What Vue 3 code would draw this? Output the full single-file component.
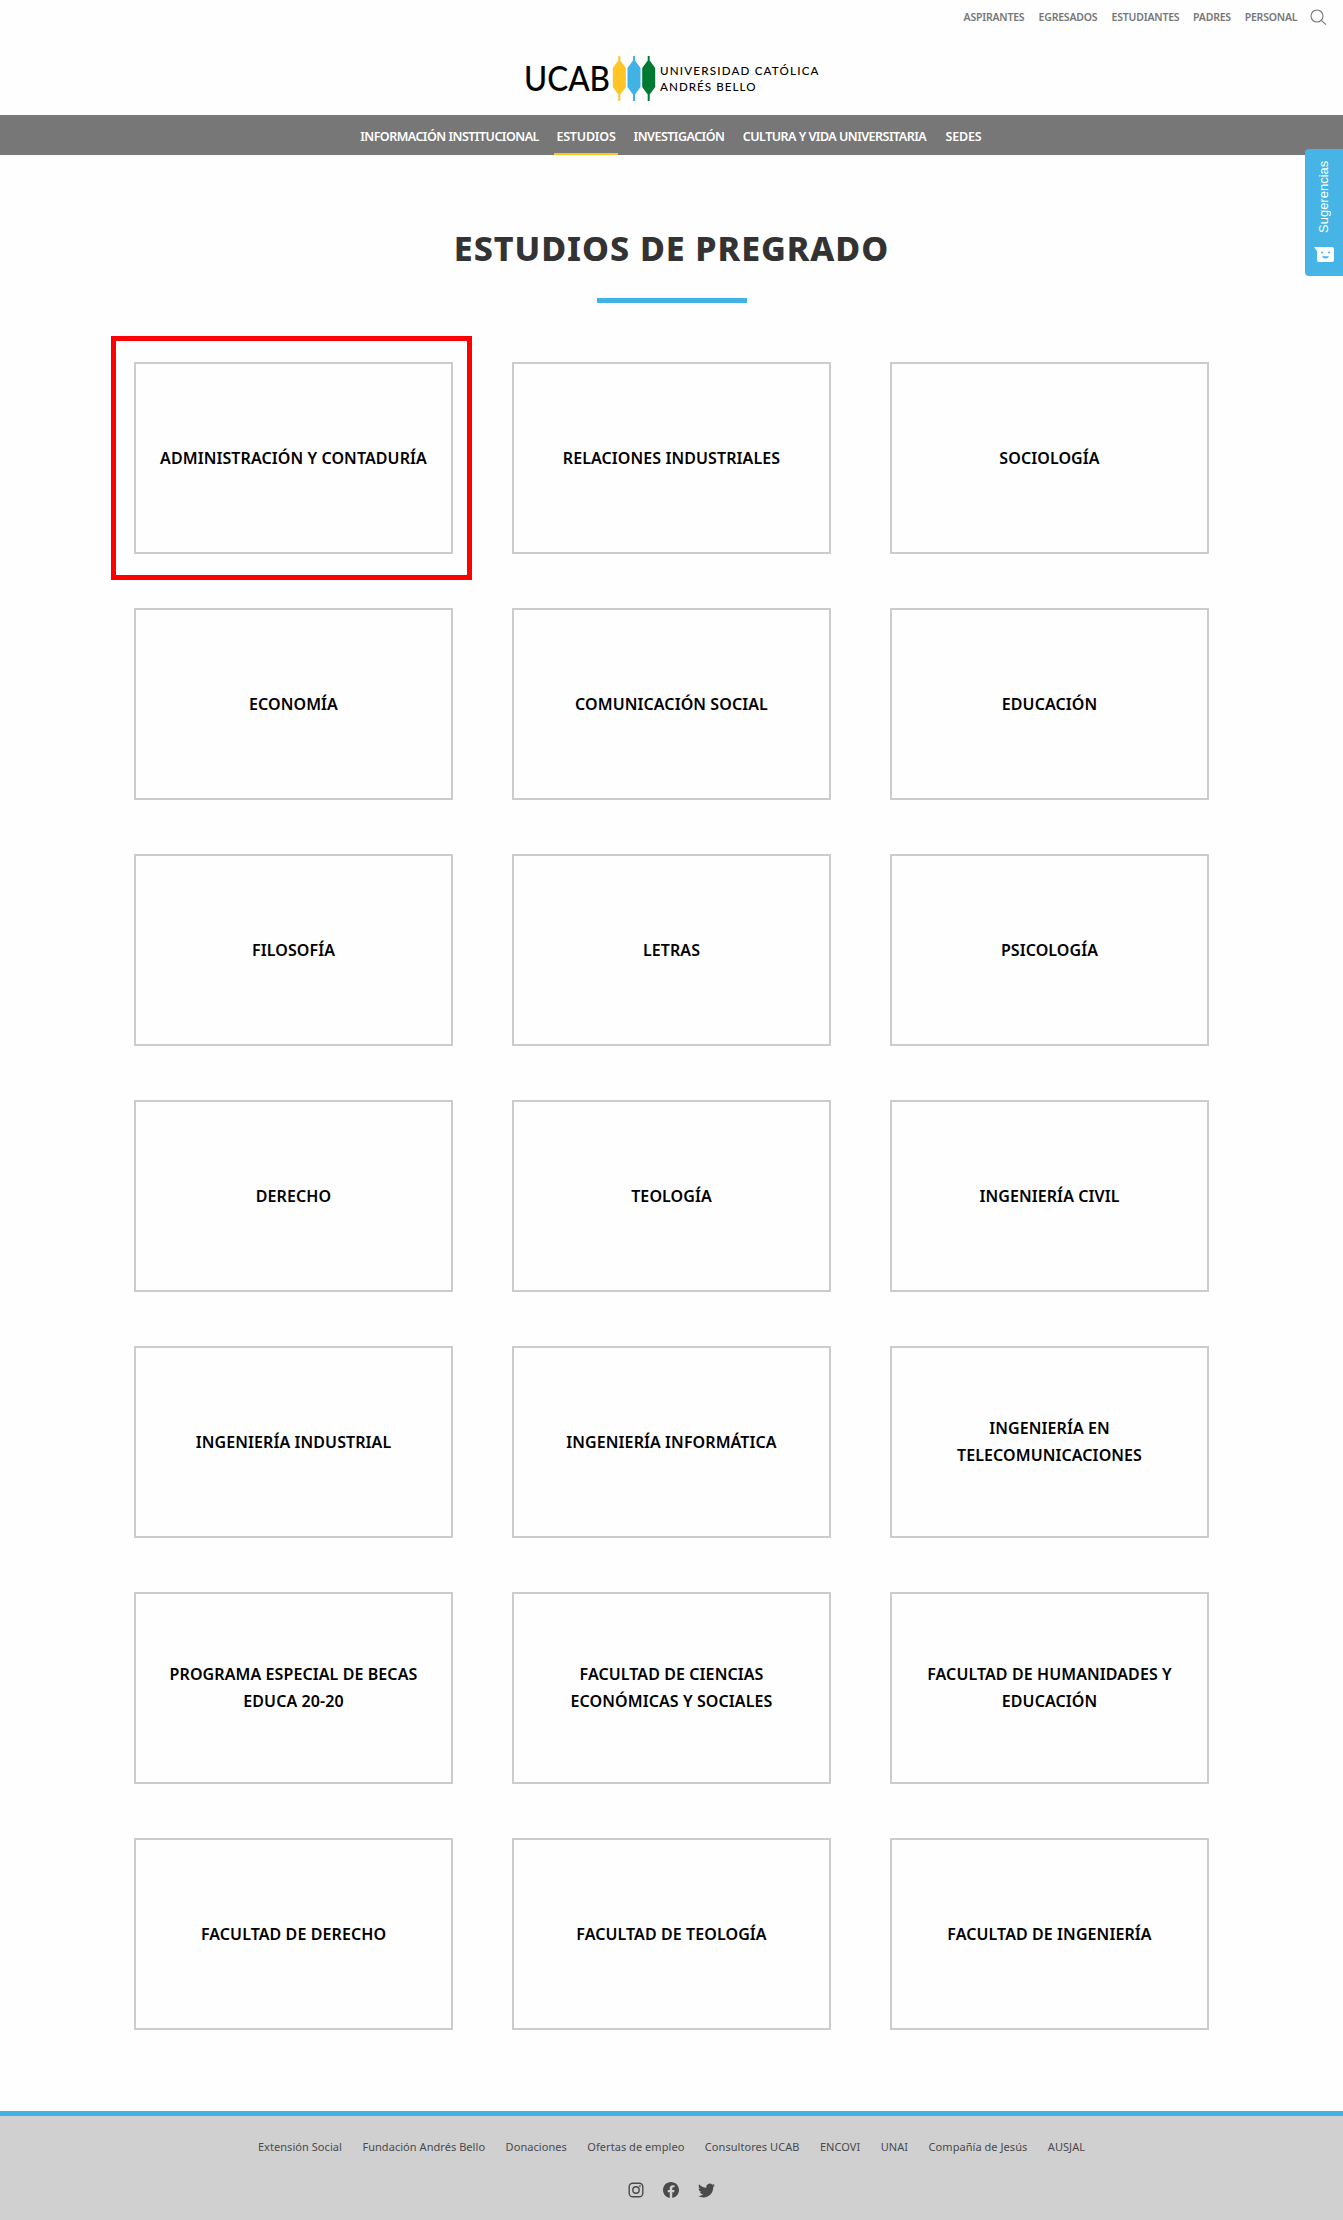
<script setup>
const topLinks = [
  { t: 'ASPIRANTES', w: 61 },
  { t: 'EGRESADOS', w: 60 },
  { t: 'ESTUDIANTES', w: 68 },
  { t: 'PADRES', w: 38 },
  { t: 'PERSONAL', w: 53 },
]
const nav = [
  { t: 'INFORMACIÓN INSTITUCIONAL', w: 178 },
  { t: 'ESTUDIOS', w: 60, active: true },
  { t: 'INVESTIGACIÓN', w: 91 },
  { t: 'CULTURA Y VIDA UNIVERSITARIA', w: 185 },
  { t: 'SEDES', w: 38 },
]
const cards = [
  'ADMINISTRACIÓN Y CONTADURÍA', 'RELACIONES INDUSTRIALES', 'SOCIOLOGÍA',
  'ECONOMÍA', 'COMUNICACIÓN SOCIAL', 'EDUCACIÓN',
  'FILOSOFÍA', 'LETRAS', 'PSICOLOGÍA',
  'DERECHO', 'TEOLOGÍA', 'INGENIERÍA CIVIL',
  'INGENIERÍA INDUSTRIAL', 'INGENIERÍA INFORMÁTICA', 'INGENIERÍA EN TELECOMUNICACIONES',
  'PROGRAMA ESPECIAL DE BECAS EDUCA 20-20', 'FACULTAD DE CIENCIAS ECONÓMICAS Y SOCIALES', 'FACULTAD DE HUMANIDADES Y EDUCACIÓN',
  'FACULTAD DE DERECHO', 'FACULTAD DE TEOLOGÍA', 'FACULTAD DE INGENIERÍA',
]
const footerLinks = ['Extensión Social', 'Fundación Andrés Bello', 'Donaciones', 'Ofertas de empleo', 'Consultores UCAB', 'ENCOVI', 'UNAI', 'Compañía de Jesús', 'AUSJAL']
</script>

<template>
  <div class="page">
    <header>
      <div class="topbar">
        <a v-for="l in topLinks" :key="l.t" :style="{ width: l.w + 'px' }">{{ l.t }}</a>
        <svg class="search" width="17" height="17" viewBox="0 0 17 17" fill="none" stroke="#777" stroke-width="1.1">
          <circle cx="7" cy="7" r="6" />
          <path d="M11.3 11.3 16 15.6" />
        </svg>
      </div>
      <svg class="logo" width="300" height="50" viewBox="0 0 300 50">
        <text class="ucab" x="3" y="38" textLength="86" lengthAdjust="spacingAndGlyphs">UCAB</text>
        <path fill="#ffc527" d="M97.300 3h2v4.500l5.500 7.500v19l-5.500 7.500V48h-2v-6.500l-5.500-7.500V15l5.500-7.500z" />
        <path fill="#41b2e6" d="M112 3h2v4.500l5.500 7.500v19l-5.500 7.500V48h-2v-6.500l-5.500-7.500V15l5.500-7.500z" />
        <path fill="#007a33" d="M126.700 3h2v4.500l5.500 7.500v19l-5.500 7.500V48h-2v-6.500l-5.500-7.500V15l5.500-7.500z" />
        <text class="uni" x="139" y="22" textLength="158.500">UNIVERSIDAD CATÓLICA</text>
        <text class="uni" x="139" y="37.600" textLength="95.500">ANDRÉS BELLO</text>
      </svg>
      <nav>
        <a v-for="n in nav" :key="n.t" :class="{ active: n.active, short: n.w < 80 }" :style="{ width: n.w + 'px' }">{{ n.t }}</a>
      </nav>
    </header>

    <main>
      <h1>ESTUDIOS DE PREGRADO</h1>
      <div class="rule"></div>
      <div class="grid">
        <div v-for="(c, i) in cards" :key="c" class="card" :class="{ marked: i === 0 }"><span>{{ c }}</span></div>
      </div>
    </main>

    <footer>
      <div class="links"><a v-for="f in footerLinks" :key="f">{{ f }}</a></div>
      <div class="social">
        <svg width="16" height="16" viewBox="0 0 16 16" fill="none" stroke="#4a4a4a" stroke-width="1.4">
          <rect x="1.200" y="1.200" width="13.600" height="13.600" rx="3.500" />
          <circle cx="8" cy="8" r="3.200" />
          <circle cx="11.900" cy="4.100" r=".9" fill="#4a4a4a" stroke="none" />
        </svg>
        <svg width="16" height="16" viewBox="0 0 24 24" fill="#4a4a4a">
          <path d="M24 12.070C24 5.400 18.630 0 12 0S0 5.400 0 12.070C0 18.100 4.390 23.090 10.130 24v-8.440H7.080v-3.490h3.050V9.410c0-3.020 1.790-4.690 4.530-4.690 1.310 0 2.690.24 2.690.24v2.970h-1.520c-1.490 0-1.960.93-1.960 1.890v2.250h3.330l-.53 3.490h-2.800V24C19.610 23.090 24 18.100 24 12.070z" />
        </svg>
        <svg width="17" height="17" viewBox="0 0 24 24" fill="#4a4a4a">
          <path d="M23.950 4.570a10 10 0 0 1-2.820.77 4.960 4.960 0 0 0 2.160-2.720c-.95.550-2 .95-3.130 1.180a4.920 4.920 0 0 0-8.380 4.480C7.690 8.090 4.070 6.130 1.640 3.160a4.820 4.820 0 0 0-.67 2.480c0 1.710.87 3.210 2.190 4.100a4.900 4.900 0 0 1-2.230-.62v.06a4.920 4.920 0 0 0 3.950 4.830 5 5 0 0 1-2.210.08 4.940 4.940 0 0 0 4.600 3.420A9.870 9.870 0 0 1 0 19.540a13.990 13.990 0 0 0 7.560 2.210c9.050 0 14-7.500 14-13.980 0-.21 0-.42-.02-.63a9.940 9.940 0 0 0 2.410-2.570z" />
        </svg>
      </div>
    </footer>

    <aside>
      <span>Sugerencias</span>
      <svg width="20" height="16" viewBox="0 0 20 16">
        <path fill="#fff" d="M0 0h18a2 2 0 0 1 2 2v11a2 2 0 0 1-2 2H5a2 2 0 0 1-2-2V4z" />
        <path d="M7 5.500h2M14 5.500h2" stroke="#46b5e6" stroke-width="1.600" />
        <path d="M8 9.200h7q-1 2.300-3.500 2.300T8 9.200z" fill="#46b5e6" />
      </svg>
    </aside>
  </div>
</template>

<style>
body { margin: 0; background: #fff; }
</style>

<style scoped>
.page { position: relative; width: 1343px; height: 2220px; display: flex; flex-direction: column; overflow: hidden; background: #fefefe; font-family: "Noto Sans", "Open Sans", sans-serif; }
header { display: flex; flex-direction: column; height: 155px; flex: none; }
.topbar { display: flex; justify-content: flex-end; gap: 13.500px; height: 35px; padding-right: 16px; margin-bottom: 18px; line-height: 35px; font-size: 10.500px; font-weight: 600; letter-spacing: -0.200px; color: #777; }
.topbar a, nav a { white-space: nowrap; display: flex; justify-content: center; }
.search { margin-top: 9px; margin-left: -1px; }
.logo { margin-left: 520.700px; flex: none; }
.ucab { font: 500 34px Lato, sans-serif; }
.uni { font: 500 11.600px Lato, sans-serif; }
nav { display: flex; justify-content: center; gap: 17.500px; height: 40px; margin-top: 12px; background: #777; color: #fff; font-size: 12.500px; font-weight: 600; line-height: 43px; letter-spacing: -0.520px; }
nav .short { letter-spacing: -0.200px; }
nav .active { position: relative; }
nav .active::after { content: ""; position: absolute; left: -2px; right: -2px; bottom: 0; height: 2px; background: #ffc527; }
main { display: flex; flex-direction: column; align-items: center; height: 1956px; flex: none; }
h1 { margin: 68px 0 0; height: 50px; line-height: 50px; font-size: 34px; font-weight: 800; letter-spacing: 0.950px; white-space: nowrap; color: #333; }
.rule { width: 150px; height: 5px; margin-top: 25px; background: #41b2e6; }
.grid { display: grid; grid-template-columns: repeat(3, 319px); grid-auto-rows: 192px; gap: 54px 59px; margin-top: 59px; }
.card { box-sizing: border-box; border: 2px solid #ccc; padding: 0 20px; display: flex; align-items: center; justify-content: center; text-align: center; font-size: 16px; line-height: 27px; font-weight: 600; letter-spacing: 0.090px; color: #000; position: relative; }
.marked::after { content: ""; position: absolute; inset: -28px -21px -28px -25px; border: 5px solid #f00; }
footer { box-sizing: border-box; height: 109px; border-top: 5px solid #41b2e6; background: #d0d0d0; color: #4a4a4a; }
.links { display: flex; justify-content: center; gap: 20.500px; padding-top: 21px; font-size: 11px; line-height: 20px; letter-spacing: 0.050px; white-space: nowrap; }
.social { display: flex; justify-content: center; align-items: center; gap: 19px; margin-top: 25px; height: 16px; }
aside { position: absolute; right: 0; top: 149px; width: 38px; height: 127px; background: #46b5e6; border-radius: 4px 0 0 4px; display: flex; flex-direction: column; align-items: center; color: #fff; }
aside span { writing-mode: vertical-rl; transform: rotate(180deg); height: 71px; margin-top: 13px; font: 13px/18px "Liberation Sans", sans-serif; white-space: nowrap; }
aside svg { margin-top: 14px; margin-left: -1px; }
</style>
